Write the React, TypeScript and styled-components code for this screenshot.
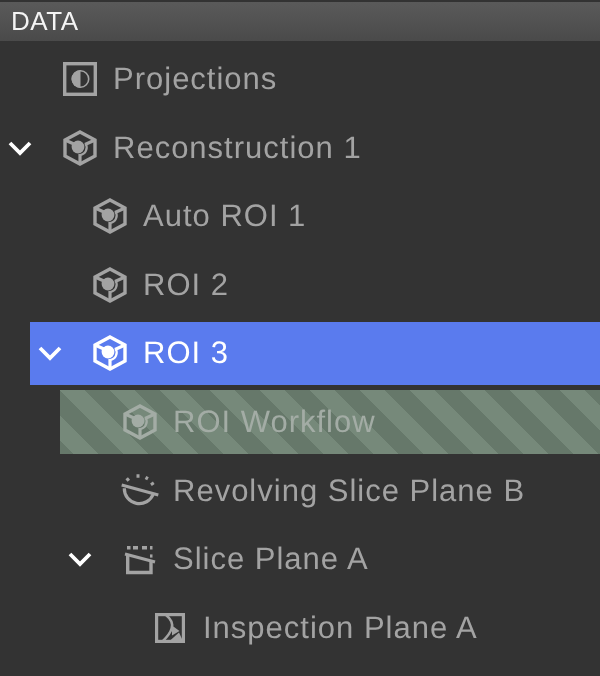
import React from "react";
import styled, { createGlobalStyle } from "styled-components";

const Global = createGlobalStyle`
  html, body { margin: 0; padding: 0; background: #333333; }
  body { width: 600px; height: 676px; overflow: hidden; font-family: "Liberation Sans", Arial, sans-serif; text-rendering: geometricPrecision; }
`;

const Panel = styled.div`
  width: 600px;
  height: 676px;
  background: #333333;
  overflow: hidden;
  display: flex;
  flex-direction: column;
`;

const Header = styled.div`
  height: 39px;
  margin-top: 2px;
  padding-left: 11px;
  display: flex;
  align-items: center;
  background: linear-gradient(#5a5a5a, #4a4a4a);
  color: #f4f4f4;
  flex: none;
`;

const Title = styled.span`
  font-size: 26px;
  letter-spacing: 0.5px;
  will-change: transform;
`;

const Tree = styled.div`
  display: grid;
  grid-auto-rows: 63.4px;
  row-gap: 5.2px;
  padding-top: 6.4px;
`;

const Row = styled.div<{ $depth: number; $state?: "selected" | "ghost" }>`
  margin-left: ${(p) => p.$depth * 30}px;
  display: flex;
  align-items: center;
  color: ${(p) => (p.$state === "selected" ? "#ffffff" : p.$state === "ghost" ? "#a3aca5" : "#a3a3a3")};
  background: ${(p) =>
    p.$state === "selected"
      ? "#5a7bee"
      : p.$state === "ghost"
      ? "repeating-linear-gradient(45deg, #66786a 0, #66786a 9.48px, #76897a 9.48px, #76897a 27.16px, #66786a 27.16px, #66786a 35.36px)"
      : "transparent"};
`;

const Chevron = styled.div`
  width: 30px;
  height: 100%;
  flex: none;
  margin-left: 5px;
  margin-right: -5px;
  display: flex;
  align-items: center;
  justify-content: center;
  svg { display: block; }
`;

const Spacer = styled.div`
  width: 30px;
  flex: none;
`;

const IconSlot = styled.div`
  width: 36px;
  height: 36px;
  margin: 0 15px 0 32px;
  flex: none;
  display: flex;
  align-items: center;
  justify-content: center;
  svg { display: block; flex: none; }
`;

const Label = styled.span`
  font-size: 31px;
  letter-spacing: 1px;
  white-space: nowrap;
  will-change: transform;
`;

const ChevronIcon = () => (
  <svg width="24" height="16" viewBox="0 0 24 16" fill="none" stroke="#fff" strokeWidth="3.8">
    <path d="M2 3 L12 13 L22 3" />
  </svg>
);

const Projection = () => (
  <svg width="34" height="34" viewBox="0 0 34 34">
    <rect x="1.7" y="1.7" width="30.6" height="30.6" fill="none" stroke="currentColor" strokeWidth="3.4" />
    <path d="M17.5 8 A9 9 0 0 0 17.5 26 Z" fill="currentColor" />
    <circle cx="17.5" cy="17" r="8.2" fill="none" stroke="currentColor" strokeWidth="1.6" />
  </svg>
);

const Cube = () => (
  <svg width="36" height="36" viewBox="0 0 36 36" fill="none" stroke="currentColor">
    <path d="M18 2 L33 10 V26 L18 34 L3 26 V10 Z" strokeWidth="3.4" />
    <path d="M3 10 L13 14.5 M33 10 L23 14.5 M18 24 V34" strokeWidth="3.2" />
    <circle cx="16" cy="17" r="6.4" fill="currentColor" stroke="none" />
    <path d="M23.5 13.5 A7.5 7.5 0 0 1 18 25" strokeWidth="2.2" />
  </svg>
);

const Revolving = () => (
  <svg width="38" height="36" viewBox="1 0 38 36" fill="none" stroke="currentColor">
    <path d="M1.7 12 L38.3 22" strokeWidth="3.2" />
    <path d="M4.3 15.3 A15 15 0 0 0 33.3 21" strokeWidth="3.2" />
    <path d="M6.5 7.5 L9 5.5 M16.5 3 H19.5 M25.5 4.5 L28 5.8 M31.5 9.5 L33.2 12" strokeWidth="3.4" />
  </svg>
);

const SlicePlane = () => (
  <svg width="32" height="32" viewBox="0 0 32 32" fill="none" stroke="currentColor">
    <path d="M3 4.7 H6.5 M9 4.7 H14 M18 4.7 H23 M26 4.7 H28.5" strokeWidth="3.4" />
    <path d="M1 11 L31 19" strokeWidth="3.2" />
    <path d="M3.7 12 V29.5 H27 V18" strokeWidth="3.4" />
    <path d="M26 13 H28.5" strokeWidth="3.2" />
  </svg>
);

const Inspection = () => (
  <svg width="30" height="30" viewBox="0 0 30 30">
    <rect x="1.6" y="1.6" width="26.8" height="26.8" fill="none" stroke="currentColor" strokeWidth="3.2" />
    <path d="M11 2 C16 6 18 11 16.7 15.3 C15.5 20 12 24 8 28" fill="none" stroke="currentColor" strokeWidth="2.6" />
    <path d="M17 12.5 L24.5 18 L17 22.5 Z" fill="currentColor" />
    <path d="M14.5 28 L24 19.5 L28 28 Z" fill="currentColor" />
  </svg>
);

type Item = {
  label: string;
  depth: number;
  icon: React.ReactNode;
  open?: boolean;
  state?: "selected" | "ghost";
};

const items: Item[] = [
  { label: "Projections", depth: 0, icon: <Projection /> },
  { label: "Reconstruction 1", depth: 0, icon: <Cube />, open: true },
  { label: "Auto ROI 1", depth: 1, icon: <Cube /> },
  { label: "ROI 2", depth: 1, icon: <Cube /> },
  { label: "ROI 3", depth: 1, icon: <Cube />, open: true, state: "selected" },
  { label: "ROI Workflow", depth: 2, icon: <Cube />, state: "ghost" },
  { label: "Revolving Slice Plane B", depth: 2, icon: <Revolving /> },
  { label: "Slice Plane A", depth: 2, icon: <SlicePlane />, open: true },
  { label: "Inspection Plane A", depth: 3, icon: <Inspection /> },
];

export default function App() {
  return (
    <Panel>
      <Global />
      <Header>
        <Title>DATA</Title>
      </Header>
      <Tree>
        {items.map((it) => (
          <Row key={it.label} $depth={it.depth} $state={it.state}>
            {it.open ? (
              <Chevron>
                <ChevronIcon />
              </Chevron>
            ) : (
              <Spacer />
            )}
            <IconSlot>{it.icon}</IconSlot>
            <Label>{it.label}</Label>
          </Row>
        ))}
      </Tree>
    </Panel>
  );
}
